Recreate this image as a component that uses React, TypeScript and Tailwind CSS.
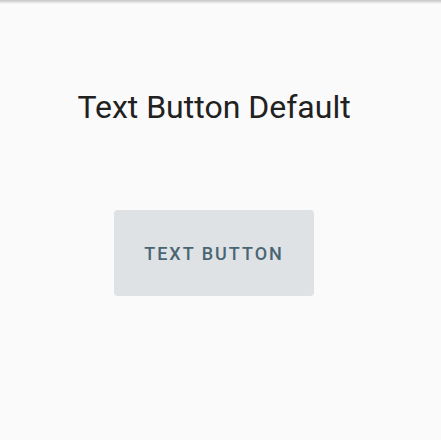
export default function App() {
  return (
    <div
      className="min-h-screen bg-[#fafafa] relative"
      style={{ fontFamily: 'Roboto, "Noto Sans", sans-serif' }}
    >
      <div className="absolute top-0 left-0 right-0 h-[4px] bg-gradient-to-b from-[#c4c4c4] to-[#fafafa]" />
      <div className="w-[428px] flex flex-col items-center pt-[88px]">
        <h1 className="text-[32px] leading-[38px] text-[#212121] font-normal">Text Button Default</h1>
        <button
          type="button"
          className="mt-[84px] w-[200px] h-[86px] rounded-[4px] bg-[#dee2e5] text-[#4a6572] text-[18px] font-medium tracking-[2px] uppercase"
        >
          Text Button
        </button>
      </div>
    </div>
  )
}
